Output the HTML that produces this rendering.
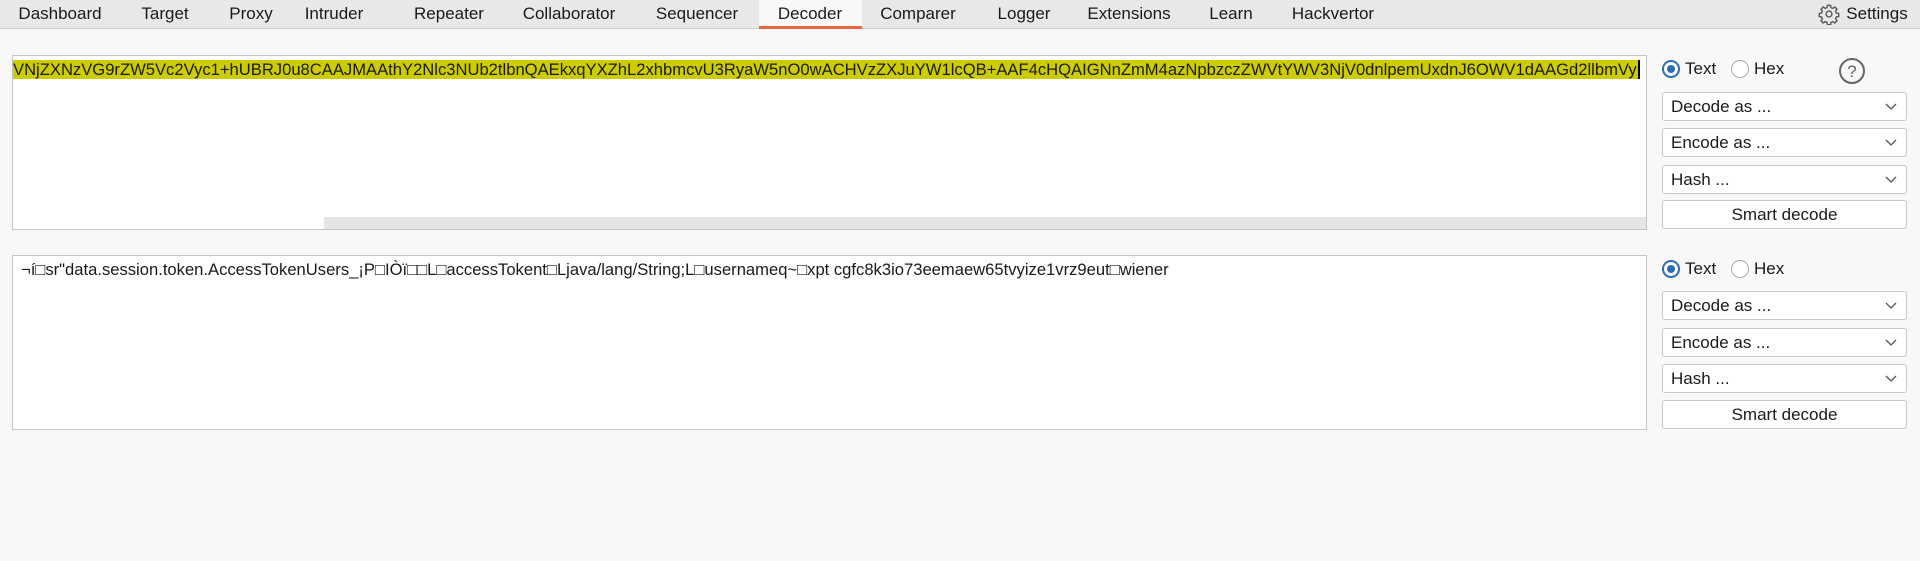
<!DOCTYPE html>
<html><head><meta charset="utf-8"><style>
*{box-sizing:border-box;margin:0;padding:0}
body{width:1920px;height:561px;background:#f8f8f8;font-family:"Liberation Sans","Noto Sans CJK SC",sans-serif;color:#1a1a1a;position:relative;overflow:hidden}
.tabs{position:absolute;left:0;top:0;width:1920px;height:29px;background:#e8e8e8;border-bottom:1px solid #cfcfcf}
.tab{position:absolute;top:4px;font-size:17px;transform:translateX(-50%);white-space:nowrap}
.sel{position:absolute;left:759px;top:0;width:103px;height:29px;background:#f8f8f8;border-bottom:3px solid #e8673f}
.ta{position:absolute;left:12px;width:1635px;background:#fff;border:1px solid #c4c4c4;overflow:hidden}
.line{position:absolute;left:0;top:2px;height:24px;white-space:nowrap;font-size:16.6px;line-height:24px}
.hl{background:#cccc00;padding-right:1px}
.sb{position:absolute;left:311px;right:0;bottom:0;height:12px;background:#e5e5e5}
.rp{position:absolute;left:1662px;width:245px}
.radio{position:absolute;font-size:17px;display:flex;align-items:center;gap:5px}
.rc{width:18px;height:18px;border-radius:50%;border:1px solid #aaa;background:#fff;display:inline-block;position:relative}
.rc.on{border:2px solid #2a6cb5}
.rc.on::after{content:"";position:absolute;left:3px;top:3px;width:8px;height:8px;border-radius:50%;background:#2a6cb5}
.dd{position:absolute;left:0;width:245px;height:29px;background:#fff;border:1px solid #c8c8c8;border-radius:3px;font-size:17px;line-height:27px;padding-left:8px}
.dd svg{position:absolute;right:9px;top:10px}
.btn{position:absolute;left:0;width:245px;height:29px;background:#fff;border:1px solid #c8c8c8;border-radius:3px;font-size:17px;line-height:27px;text-align:center}
</style></head><body>
<div class="tabs">
<div class="sel"></div>
<span class="tab" style="left:60px">Dashboard</span>
<span class="tab" style="left:165px">Target</span>
<span class="tab" style="left:251px">Proxy</span>
<span class="tab" style="left:334px">Intruder</span>
<span class="tab" style="left:449px">Repeater</span>
<span class="tab" style="left:569px">Collaborator</span>
<span class="tab" style="left:697px">Sequencer</span>
<span class="tab" style="left:810px">Decoder</span>
<span class="tab" style="left:918px">Comparer</span>
<span class="tab" style="left:1024px">Logger</span>
<span class="tab" style="left:1129px">Extensions</span>
<span class="tab" style="left:1231px">Learn</span>
<span class="tab" style="left:1333px">Hackvertor</span>
<svg style="position:absolute;left:1818px;top:3px" width="22" height="22" viewBox="0 0 24 24" fill="none" stroke="#555" stroke-width="1.5"><circle cx="12" cy="12" r="3.2"/><path d="M10.3 2.5h3.4l.5 2.6 1.9.8 2.2-1.5 2.4 2.4-1.5 2.2.8 1.9 2.6.5v3.4l-2.6.5-.8 1.9 1.5 2.2-2.4 2.4-2.2-1.5-1.9.8-.5 2.6h-3.4l-.5-2.6-1.9-.8-2.2 1.5-2.4-2.4 1.5-2.2-.8-1.9-2.6-.5v-3.4l2.6-.5.8-1.9-1.5-2.2 2.4-2.4 2.2 1.5 1.9-.8z"/></svg>
<span class="tab" style="left:1877px">Settings</span>
</div>

<div class="ta" style="top:55px;height:175px">
<div class="line"><span class="hl">VNjZXNzVG9rZW5Vc2Vyc1+hUBRJ0u8CAAJMAAthY2Nlc3NUb2tlbnQAEkxqYXZhL2xhbmcvU3RyaW5nO0wACHVzZXJuYW1lcQB+AAF4cHQAIGNnZmM4azNpbzczZWVtYWV3NjV0dnlpemUxdnJ6OWV1dAAGd2llbmVy</span><span style="border-left:2px solid #000"></span></div>
<div class="sb"></div>
</div>
<div class="rp" style="top:0">
<div class="radio" style="left:0;top:59px"><span class="rc on"></span>Text</div>
<div class="radio" style="left:69px;top:59px"><span class="rc"></span>Hex</div>
<svg style="position:absolute;left:176px;top:57px" width="28" height="28" viewBox="0 0 28 28"><circle cx="14" cy="14" r="12" fill="none" stroke="#666" stroke-width="2"/><text x="14" y="20" text-anchor="middle" font-size="17" font-family="Liberation Sans" fill="#666">?</text></svg>
<div class="dd" style="top:92px">Decode as ...<svg width="12" height="8"><path d="M1 1l5 5 5-5" fill="none" stroke="#555" stroke-width="1.3"/></svg></div>
<div class="dd" style="top:128px">Encode as ...<svg width="12" height="8"><path d="M1 1l5 5 5-5" fill="none" stroke="#555" stroke-width="1.3"/></svg></div>
<div class="dd" style="top:165px">Hash ...<svg width="12" height="8"><path d="M1 1l5 5 5-5" fill="none" stroke="#555" stroke-width="1.3"/></svg></div>
<div class="btn" style="top:200px">Smart decode</div>
</div>

<div class="ta" style="top:255px;height:175px">
<div class="line" style="left:8px">¬í□sr"data.session.token.AccessTokenUsers_¡P□IÒï□□L□accessTokent□Ljava/lang/String;L□usernameq~□xpt cgfc8k3io73eemaew65tvyize1vrz9eut□wiener</div>
</div>
<div class="rp" style="top:0">
<div class="radio" style="left:0;top:259px"><span class="rc on"></span>Text</div>
<div class="radio" style="left:69px;top:259px"><span class="rc"></span>Hex</div>
<div class="dd" style="top:291px">Decode as ...<svg width="12" height="8"><path d="M1 1l5 5 5-5" fill="none" stroke="#555" stroke-width="1.3"/></svg></div>
<div class="dd" style="top:328px">Encode as ...<svg width="12" height="8"><path d="M1 1l5 5 5-5" fill="none" stroke="#555" stroke-width="1.3"/></svg></div>
<div class="dd" style="top:364px">Hash ...<svg width="12" height="8"><path d="M1 1l5 5 5-5" fill="none" stroke="#555" stroke-width="1.3"/></svg></div>
<div class="btn" style="top:400px">Smart decode</div>
</div>
</body></html>
